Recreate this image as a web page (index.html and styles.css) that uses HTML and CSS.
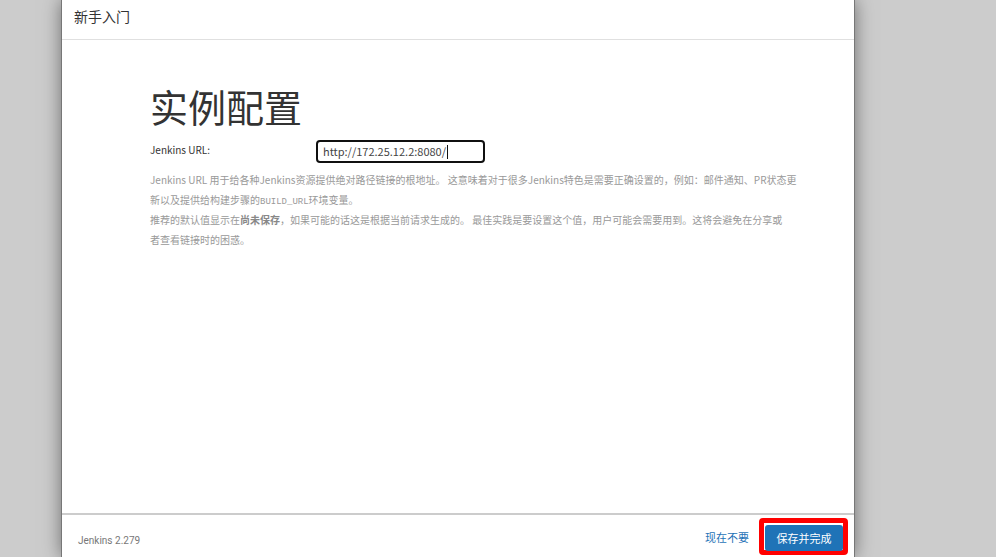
FILE: index.html
```html
<!DOCTYPE html>
<html lang="zh-CN">
<head>
    <meta charset="UTF-8">
    <meta name="viewport" content="width=device-width, initial-scale=1.0">
    <title>新手入门</title>
    <link rel="stylesheet" href="styles.css">
</head>
<body>
    <form class="modal-content">
        <header class="modal-header">新手入门</header>
        <main class="modal-body">
            <h1>实例配置</h1>
            <div class="form-row">
                <label for="root-url">Jenkins URL:</label>
                <div class="input-wrap">
                    <input type="text" class="root-url" id="root-url" value="http://172.25.12.2:8080/" spellcheck="false" autofocus>
                </div>
            </div>
            <div class="help">
                Jenkins URL 用于给各种Jenkins资源提供绝对路径链接的根地址。 这意味着对于很多Jenkins特色是需要正确设置的，例如：邮件通知、PR状态更新以及提供给构建步骤的<code>BUILD_URL</code>环境变量。<br>
                推荐的默认值显示在<strong>尚未保存</strong>，如果可能的话这是根据当前请求生成的。 最佳实践是要设置这个值，用户可能会需要用到。这将会避免在分享或<br>者查看链接时的困惑。
            </div>
        </main>
        <footer class="modal-footer">
            <span class="version">Jenkins 2.279</span>
            <button type="button" class="btn btn-link">现在不要</button>
            <div class="highlight">
                <button type="submit" class="btn btn-primary">保存并完成</button>
            </div>
        </footer>
    </form>
</body>
</html>
```

FILE: styles.css
```css
* {
    box-sizing: border-box;
}
body {
    margin: 0;
    padding: 0 142px 0 62px;
    min-height: 100vh;
    display: flex;
    background-color: #ccc;
    color: #333;
    font-family: "Noto Sans CJK SC", sans-serif;
    font-size: 11px;
}
.modal-content {
    flex: 1;
    min-width: 0;
    display: flex;
    flex-direction: column;
    background-color: #fff;
    box-shadow: 0 0 0 1px #777, 0 0 18px rgba(0, 0, 0, 0.5);
}
.modal-header {
    padding: 6px 12px 12px;
    border-bottom: 1px solid #e0e0e0;
    font-size: 14px;
    line-height: 21px;
}
.modal-body {
    flex: 1;
    padding: 44px 56px 20px 88px;
}
h1 {
    margin: 0 0 12px;
    font-size: 38px;
    font-weight: 400;
    line-height: 44px;
}
.form-row {
    display: flex;
    margin-bottom: 7px;
}
.form-row label {
    width: 166px;
    font-size: 10px;
    line-height: 20px;
}
.input-wrap {
    position: relative;
    height: 23px;
}
/* text cursor */
.input-wrap::after {
    content: "";
    position: absolute;
    top: 5px;
    left: 131px;
    width: 1px;
    height: 14px;
    background-color: #111;
}
.root-url {
    width: 169px;
    height: 23px;
    padding: 0 5px 1px;
    border: 2px solid #101010;
    border-radius: 4px;
    color: #444;
    font: inherit;
    outline: none;
    caret-color: transparent;
}
.help {
    color: #999;
    font-size: 10px;
    line-height: 20px;
}
.help code {
    font-family: "Liberation Mono", monospace;
    font-size: 9px;
    line-height: 1;
}
.help strong {
    color: #888;
    line-height: 1;
}
.modal-footer {
    display: flex;
    align-items: center;
    height: 44px;
    padding: 0 6px 0 16px;
    border-top: 2px solid #ccc;
}
.version {
    flex: 1;
    padding-top: 8px;
    color: #777;
    font-family: Roboto, sans-serif;
    font-size: 10px;
}
.btn {
    height: 26px;
    padding: 0 10px;
    border: none;
    border-radius: 3px;
    font: inherit;
    cursor: pointer;
}
.btn-link {
    margin-top: 2px;
    background: none;
    color: #1f73b7;
}
.btn-primary {
    width: 78px;
    background-color: #1f73b7;
    color: #fff;
}
.highlight {
    padding: 2px 0 0 1px;
    width: 89px;
    height: 37px;
    border: 5px solid #f00;
    border-radius: 4px;
}
```
